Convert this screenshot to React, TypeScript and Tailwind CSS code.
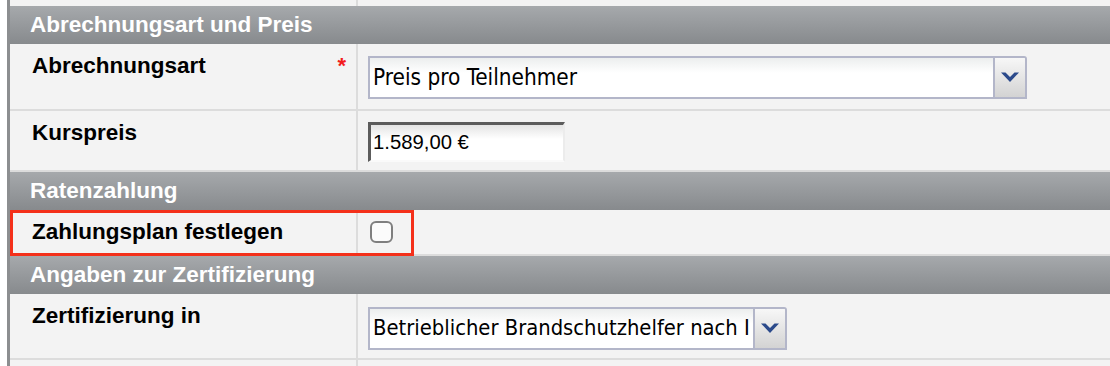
import React from 'react';

const labelFont = { fontFamily: '"Liberation Sans", Arial, sans-serif' };
const fieldFont = { fontFamily: '"DejaVu Sans Condensed", "DejaVu Sans", sans-serif' };

function Chevron() {
  return (
    <svg width="18" height="11" viewBox="0 0 18 11" aria-hidden="true">
      <polygon points="0,0.5 4.5,0.5 9,5 13.5,0.5 18,0.5 9,10" fill="#2b4a8b" />
    </svg>
  );
}

function SectionHeader({ title }: { title: string }) {
  return (
    <div className="flex h-[38px] items-center bg-gradient-to-b from-[#a6a9ac] to-[#878a8d] pl-[20px]">
      <span className="text-[22.5px] font-bold leading-none text-white" style={labelFont}>
        {title}
      </span>
    </div>
  );
}

function Row({
  label,
  required,
  children,
  className = '',
  labelClass = '',
}: {
  label?: string;
  required?: boolean;
  children?: React.ReactNode;
  className?: string;
  labelClass?: string;
}) {
  return (
    <div className={`grid grid-cols-[348px_1fr] border-b-2 border-[#dcdcdc] ${className}`}>
      <div className={`relative border-r-2 border-[#dcdcdc] pl-[22px] ${labelClass}`}>
        {label && (
          <span className="text-[22.5px] font-bold leading-[26px] text-black" style={labelFont}>
            {label}
          </span>
        )}
        {required && (
          <span
            className="absolute right-[10px] top-[11px] text-[22px] font-bold leading-none text-[#f21b1b]"
            style={labelFont}
          >
            *
          </span>
        )}
      </div>
      <div className="pl-[10px]">{children}</div>
    </div>
  );
}

function Select({ value, width, textSize }: { value: string; width: string; textSize: string }) {
  return (
    <div className={`flex h-[43px] overflow-hidden rounded-tr-[3px] border-2 border-[#b3b6c9] ${width}`}>
      <div
        className={`flex min-w-0 flex-1 items-center overflow-hidden whitespace-nowrap bg-[linear-gradient(#eceeee,#ffffff_38%)] pl-[3px] text-black ${textSize}`}
        style={fieldFont}
      >
        {value}
      </div>
      <div className="flex w-[32px] shrink-0 items-center justify-center border-l-2 border-[#b3b6c9] bg-[linear-gradient(#f7f7f7,#d3d3d3)]">
        <Chevron />
      </div>
    </div>
  );
}

export default function App() {
  return (
    <div className="h-[366px] w-[1110px] overflow-hidden bg-white pl-[7px]">
      <div className="h-full border-l-[3px] border-[#8c8e90] bg-[#f3f3f3]">
        <div className="grid h-[6px] grid-cols-[348px_1fr]">
          <div className="border-r-2 border-[#dcdcdc]" />
          <div />
        </div>

        <SectionHeader title="Abrechnungsart und Preis" />

        <Row label="Abrechnungsart" required className="h-[67px]" labelClass="pt-[9px]">
          <div className="pt-[12px]">
            <Select value="Preis pro Teilnehmer" width="w-[659px]" textSize="text-[22.4px]" />
          </div>
        </Row>

        <Row label="Kurspreis" className="h-[61px] border-b-0" labelClass="pt-[9px]">
          <div className="pt-[11px]">
            <div
              className="flex h-[40px] w-[197px] items-center border-t-[3px] border-l-[3px] border-r-2 border-b-2 border-t-[#5c5c5c] border-l-[#5c5c5c] border-r-[#ececec] border-b-[#fafafa] bg-[linear-gradient(#e4e4e4,#ffffff_40%)] pl-[2px] text-[20.3px] text-black"
              style={labelFont}
            >
              1.589,00 €
            </div>
          </div>
        </Row>

        <SectionHeader title="Ratenzahlung" />

        <div className="relative">
          <Row label="Zahlungsplan festlegen" className="h-[46px] border-b-0" labelClass="flex items-center">
            <div className="flex h-full items-center pl-[2px]">
              <div className="h-[22px] w-[23px] rounded-[6px] border-2 border-[#7f7f7f] bg-[#fbfbfb]" />
            </div>
          </Row>
          <div className="pointer-events-none absolute left-0 top-0 h-[46px] w-[404px] border-[3px] border-[#f4301a]" />
        </div>

        <SectionHeader title="Angaben zur Zertifizierung" />

        <Row label="Zertifizierung in" className="h-[66px]" labelClass="pt-[9px]">
          <div className="pt-[13px]">
            <Select
              value="Betrieblicher Brandschutzhelfer nach I"
              width="w-[419px]"
              textSize="text-[21.8px]"
            />
          </div>
        </Row>

        <div className="grid h-[10px] grid-cols-[348px_1fr]">
          <div className="border-r-2 border-[#dcdcdc]" />
          <div />
        </div>
      </div>
    </div>
  );
}
